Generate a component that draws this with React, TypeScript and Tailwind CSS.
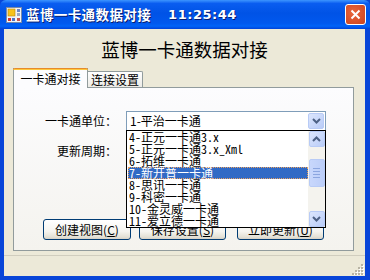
import React from "react";

const items = [
  "4-正元一卡通3.x",
  "5-正元一卡通3.x_Xml",
  "6-拓维一卡通",
  "7-新开普一卡通",
  "8-思讯一卡通",
  "9-科密一卡通",
  "10-金灵威一卡通",
  "11-爱立德一卡通",
];

function Chevron({ up = false }: { up?: boolean }) {
  return (
    <svg width="9" height="6" viewBox="0 0 9 6" className={up ? "rotate-180" : ""}>
      <path d="M1 1 L4.5 4.5 L8 1" fill="none" stroke="#4D6185" strokeWidth="2" />
    </svg>
  );
}

function ArrowButton({ up = false }: { up?: boolean }) {
  return (
    <div className="w-[16px] h-[16px] flex items-center justify-center rounded-[2px] border border-[#B8CBF6] bg-[linear-gradient(135deg,#DCE6FD,#B9CCF8)]">
      <Chevron up={up} />
    </div>
  );
}

function XpButton({ label, hot }: { label: string; hot: string }) {
  return (
    <div className="w-full h-[21px] flex items-center justify-center rounded-[3px] border border-[#003C74] bg-[linear-gradient(180deg,#FFFFFF_0%,#F5F4EF_60%,#E3E0D5_90%,#D6D0C5_100%)] text-[12px] text-black">
      {label}(<span className="underline">{hot}</span>)
    </div>
  );
}

function Combo({ value }: { value: string }) {
  return (
    <div className="w-[200px] h-[20px] border border-[#7F9DB9] bg-white flex items-center pl-[3px] pr-[1px]">
      <span className="flex-1 text-[12px] text-black leading-none">{value}</span>
      <ArrowButton />
    </div>
  );
}

function TitleIcon() {
  return (
    <svg width="16" height="16" viewBox="0 0 16 16">
      <rect x="0.5" y="0.5" width="15" height="15" fill="#F4F4F4" stroke="#7A8AA8" />
      <rect x="2" y="2" width="7" height="7" fill="#F7C21A" stroke="#B8860B" strokeWidth="0.6" />
      <rect x="11" y="2" width="3" height="3" fill="#6A86C8" />
      <rect x="11" y="6" width="3" height="3" fill="#9AA6C0" />
      <rect x="2" y="11" width="3" height="3" fill="#D9352B" />
      <rect x="6" y="11" width="3" height="3" fill="#4E72C6" />
      <rect x="11" y="11" width="3" height="3" fill="#C9524A" />
    </svg>
  );
}

export default function App() {
  return (
    <div className="w-[370px] h-[280px] flex flex-col bg-[#0845D8] font-['Noto_Sans_CJK_SC',sans-serif] overflow-hidden">
      {/* title bar */}
      <div className="h-[29px] flex items-center pl-[6px] pr-[4px] rounded-t-[6px] bg-[linear-gradient(180deg,#3D95FF_0%,#0A5DF0_12%,#0053E6_45%,#0058EE_80%,#0063F8_90%,#0042D8_100%)]">
        <TitleIcon />
        <span className="ml-[4px] text-white font-bold text-[13.5px] tracking-[0.4px] whitespace-pre [text-shadow:1px_1px_0_#0A1E6E]">
          蓝博一卡通数据对接
        </span>
        <span className="ml-[17px] text-white font-bold text-[13px] font-['DejaVu_Sans',sans-serif] tracking-[0.5px] [text-shadow:1px_1px_0_#0A1E6E]">
          11:25:44
        </span>
        <div className="ml-auto w-[21px] h-[21px] rounded-[3px] border border-white bg-[radial-gradient(circle_at_40%_40%,#E8673C_0%,#D8502A_60%,#C8441F_100%)] flex items-center justify-center">
          <svg width="11" height="11" viewBox="0 0 11 11">
            <path d="M1.5 1.5 L9.5 9.5 M9.5 1.5 L1.5 9.5" stroke="white" strokeWidth="2" />
          </svg>
        </div>
      </div>

      {/* client */}
      <div className="flex-1 ml-[4px] mr-[5px] mb-[4px] bg-[#ECE9D8] flex flex-col">
        <div className="h-[39px] flex items-center justify-center text-[18.5px] text-black pt-[2px]">
          蓝博一卡通数据对接
        </div>

        <div className="flex flex-col ml-[9px] w-[341px]">
          {/* tabs */}
          <div className="h-[19px] flex items-end relative z-10">
            <div className="h-[20px] w-[75px] mb-[-1px] border-x border-[#919B9C] bg-[#FCFCFE] flex flex-col">
              <div className="h-[3px] bg-[#FFC83C] border-t border-[#E68B2C] rounded-t-[2px] -mx-[1px]" />
              <div className="flex-1 flex items-center justify-center text-[12px] text-black">一卡通对接</div>
            </div>
            <div className="h-[16px] w-[55px] border-t border-r border-[#919B9C] rounded-tr-[2px] bg-[linear-gradient(180deg,#FFFFFF,#ECEBE6)] flex items-center justify-center text-[12px] text-black">
              连接设置
            </div>
          </div>

          {/* tab page */}
          <div className="h-[164px] border border-[#919B9C] bg-[linear-gradient(180deg,#FCFCFE_0%,#F4F3EE_100%)] pt-[23px]">
            <div className="relative flex items-center h-[20px]">
              <div className="w-[103px] text-right text-[12px] text-black">一卡通单位：</div>
              <div className="ml-[9px] relative">
                <Combo value="1-平治一卡通" />
                <div className="absolute left-0 top-[19px] w-[200px] h-[98px] border border-black bg-white flex z-20">
                  <div className="flex-1 flex flex-col pl-[1px] font-['Noto_Sans_Mono_CJK_SC','Noto_Sans_CJK_SC',sans-serif]">
                    {items.map((t, i) =>
                      i === 3 ? (
                        <div
                          key={t}
                          className="h-[12px] flex items-center pl-[1px] bg-[#316AC5] text-white text-[12px] leading-none outline-1 outline-dotted outline-offset-[-1px] outline-[#E8A060]"
                        >
                          {t}
                        </div>
                      ) : (
                        <div key={t} className="h-[12px] flex items-center pl-[1px] text-black text-[12px] leading-none">
                          {t}
                        </div>
                      )
                    )}
                  </div>
                  <div className="w-[17px] bg-[#F4F3EE] flex flex-col items-center">
                    <ArrowButton up />
                    <div className="mt-[12px] w-[16px] h-[28px] rounded-[2px] border border-[#B8CBF6] bg-[linear-gradient(90deg,#C8D7FC,#BCCEF9)] flex flex-col items-center justify-center gap-[2px]">
                      <div className="w-[7px] h-[1px] bg-[#8CA6E0]" />
                      <div className="w-[7px] h-[1px] bg-[#8CA6E0]" />
                      <div className="w-[7px] h-[1px] bg-[#8CA6E0]" />
                      <div className="w-[7px] h-[1px] bg-[#8CA6E0]" />
                    </div>
                    <div className="flex-1" />
                    <ArrowButton />
                  </div>
                </div>
              </div>
            </div>

            <div className="flex items-center h-[20px] mt-[10px]">
              <div className="w-[103px] text-right text-[12px] text-black">更新周期：</div>
              <div className="ml-[9px]">
                <Combo value="" />
              </div>
            </div>

            <div className="flex mt-[58px] pl-[29px]">
              <div className="w-[88px]">
                <XpButton label="创建视图" hot="C" />
              </div>
              <div className="w-[87px] ml-[8px]">
                <XpButton label="保存设置" hot="S" />
              </div>
              <div className="w-[87px] ml-[11px]">
                <XpButton label="立即更新" hot="U" />
              </div>
            </div>
          </div>
        </div>

        {/* status bar */}
        <div className="mt-[4px] flex-1 border-t border-[#D0CDBE] flex items-end justify-end pr-[1px] pb-[1px]">
          <svg width="12" height="12" viewBox="0 0 12 12">
            {[
              [9, 1],
              [6, 4],
              [9, 4],
              [3, 7],
              [6, 7],
              [9, 7],
              [0, 10],
              [3, 10],
              [6, 10],
              [9, 10],
            ].map(([x, y], i) => (
              <g key={i}>
                <rect x={x + 1} y={y + 1} width="2" height="2" fill="#FFFFFF" />
                <rect x={x} y={y} width="2" height="2" fill="#B8B4A4" />
              </g>
            ))}
          </svg>
        </div>
      </div>
    </div>
  );
}
